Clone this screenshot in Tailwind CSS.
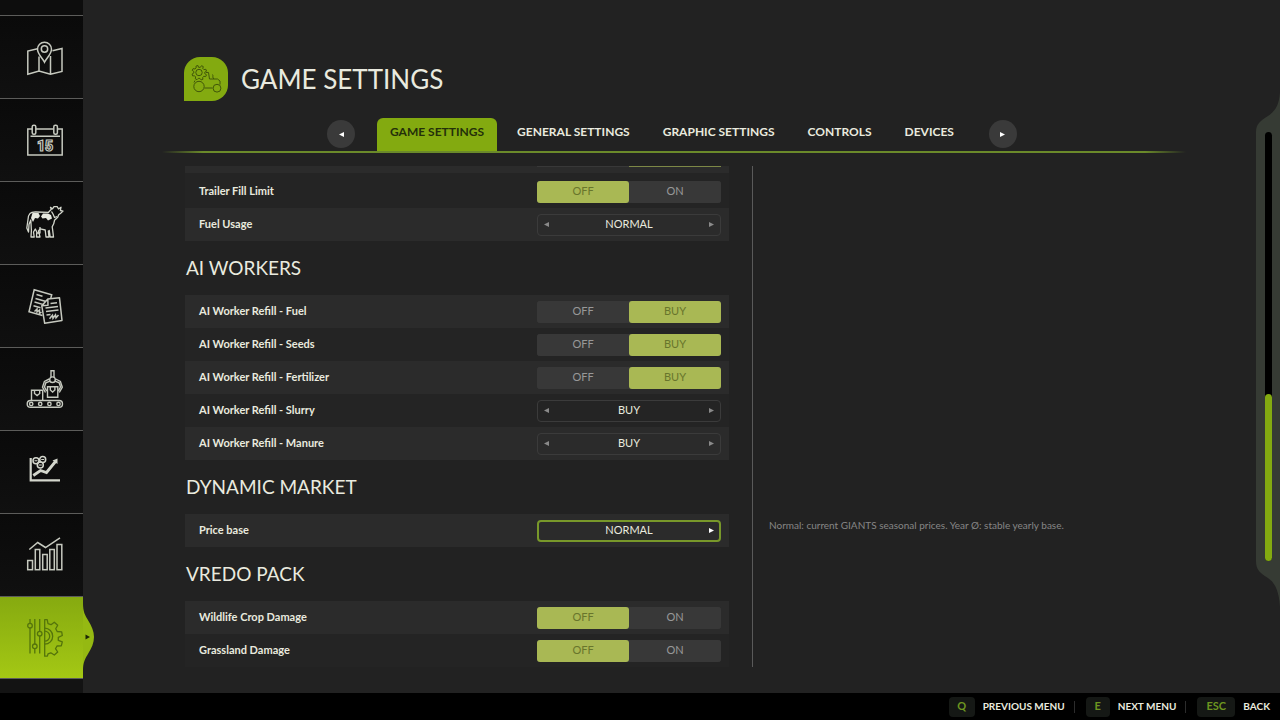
<!DOCTYPE html>
<html lang="en">
<head>
  <meta charset="UTF-8">
  <title>Game Settings</title>
  <meta name="viewport" content="width=device-width, initial-scale=1.0">
  <script src="https://cdn.jsdelivr.net/npm/@tailwindcss/browser@4"></script>
</head>
<body class="flex h-screen flex-col overflow-hidden bg-[#222222] font-[Lato,'Open_Sans',sans-serif] text-[#e9eadf]">
  <div class="flex min-h-0 flex-1">

    <!-- Sidebar -->
    <nav class="z-10 flex w-[83px] shrink-0 flex-col bg-[#0d0d0d]" aria-label="Menu">
      <div class="h-4 shrink-0 border-b border-[#5c5c5a]"></div>

      <a href="#map" aria-label="Map" class="flex h-[83px] shrink-0 items-center border-b border-[#5c5c5a] bg-linear-to-b from-[#0a0a0a] to-[#101010] pl-[26px]">
        <svg class="size-[38px]" viewBox="0 0 38 38" fill="none" stroke="#c6c9bf" stroke-width="1.5">
          <path d="M11.5 10.8 1.8 13v23.3L13 33l11.5 3.3L36 33.4V10.5l-9.5 2.3M13 33V18.500M24.500 36.300V18"/>
          <path d="M18.500 24.200c-2-4.200-7-8.200-7-13a7 7 0 0 1 14 0c0 4.800-5 8.800-7 13Z"/>
          <circle cx="18.500" cy="11" r="3.200"/>
        </svg>
      </a>

      <a href="#calendar" aria-label="Calendar" class="flex h-[83px] shrink-0 items-center border-b border-[#5c5c5a] bg-linear-to-b from-[#0a0a0a] to-[#101010] pl-[26px]">
        <svg class="size-[38px]" viewBox="0 0 38 38" fill="none" stroke="#c6c9bf" stroke-width="1.5">
          <path d="M6 8H1.800v26h34.400V8H32M10 8h17.500M4.500 15.200h29.500"/>
          <rect x="6.200" y="4.200" width="3.600" height="9" rx="1.500"/>
          <rect x="27.800" y="4.200" width="3.600" height="9" rx="1.500"/>
          <text x="19" y="29.500" text-anchor="middle" font-family="Roboto" font-size="14" font-weight="900" stroke-width="1.200">15</text>
        </svg>
      </a>

      <a href="#animals" aria-label="Animals" class="flex h-[83px] shrink-0 items-center border-b border-[#5c5c5a] bg-linear-to-b from-[#0a0a0a] to-[#101010] pl-[26px]">
        <svg class="size-[38px]" viewBox="0 0 38 38" fill="none" stroke="#d3d6cc" stroke-width="1.300" stroke-linejoin="round">
          <path d="M4 9.500C5.500 7.800 8 8 10 8l12.500.300 2.800-3-.8-2 2 1.600 1.500-2.300h3.200L32.500 5l2.500-1.800-.6 3.300 2.600.6-2.300 2.200-2 1.500-1 2.500-3.200 3-.8 3.500-1.500 3 .5 3.500.8 6.700h-3.300l-.9-6.500-1 .500.700 6h-3l-.8-7-5-1.200-1.700 2.200 1.500 6H10.500l.3-5-1.500-3-1.800 3 .7 5H5l.4-6.500L4.800 16 3 20.500 2.500 28l-1.700-4L2.500 12Z"/>
          <path d="M6.500 9h6l1.500 3-2 2.500-3-.5L7 18l-2-4Z" fill="#e6e8df" stroke="none"/>
          <path d="M17 9.500h5l3 1.500 1 3.500-4 2-2-2.500-3.500.500-1.500-2Z" fill="#e6e8df" stroke="none"/>
          <path d="M25.500 7.500 27 10l1.500 3.500L31 12.500M14 23v6h-3"/>
        </svg>
      </a>

      <a href="#contracts" aria-label="Contracts" class="flex h-[83px] shrink-0 items-center border-b border-[#5c5c5a] bg-linear-to-b from-[#0a0a0a] to-[#101010] pl-[26px]">
        <svg class="size-[38px]" viewBox="0 0 38 38" fill="none" stroke="#c6c9bf" stroke-width="1.500">
          <path d="M16.500 28.500 3 24.800 8.200 2.800l17.500 5-1 4"/>
          <path d="M10.500 7.500l6 1.700M9.500 11.500l10.500 3M8.500 15l9 2.600M7.500 18.800l7 2"/>
          <path d="m8.500 24.500 2.500-2.500v3l2.500-2v3.500l2-1.500"/>
          <path d="M15.800 18.800 21.800 12l11.700-1.200L36 33.400l-17.300 2.900ZM15.800 18.800l6.200-.6-.2-6.200" stroke-linejoin="round"/>
          <path d="m24.500 16.500 6.500-.8M19.500 21l12.500-1.600M20 24.500l12.500-1.600M20.500 28l4-.5"/>
          <path d="m23.500 31.800 3-3.500.5 3 2.500-3.500.5 3 2.500-2.800"/>
        </svg>
      </a>

      <a href="#production" aria-label="Production" class="flex h-[83px] shrink-0 items-center border-b border-[#5c5c5a] bg-linear-to-b from-[#0a0a0a] to-[#101010] pl-[26px]">
        <svg class="size-[38px]" viewBox="0 0 38 38" fill="none" stroke="#c6c9bf" stroke-width="1.400">
          <rect x="1.200" y="30.500" width="35.300" height="6.800" rx="3.400"/>
          <circle cx="5.200" cy="33.900" r="1.700"/><circle cx="14.200" cy="33.900" r="1.700"/>
          <circle cx="23.400" cy="33.900" r="1.700"/><circle cx="32.500" cy="33.900" r="1.700"/>
          <path d="M5.500 30.500V20.300h11.200v10.200M8.500 20.500v3l2.600 2 2.600-2v-3"/>
          <path d="M21.500 16.800h10.300v10.500H21.500ZM24.300 17v3l2.300 2 2.300-2v-3"/>
          <path d="M25 7V.8h3V7"/>
          <circle cx="26.500" cy="9.700" r="2.800"/>
          <path d="m24 11.200-4.200 1.600-1.300 4.200 2.300 4.200M23.300 9l-4.900 2.400-1.900 5.800 3 5.300M29 11.200l4.200 1.600 1.300 4.200-2.300 4.200M29.700 9l4.700 2.400 1.900 5.800-3 5.300"/>
        </svg>
      </a>

      <a href="#prices" aria-label="Prices" class="flex h-[83px] shrink-0 items-center border-b border-[#5c5c5a] bg-linear-to-b from-[#0a0a0a] to-[#101010] pl-[26px]">
        <svg class="size-[38px]" viewBox="0 0 38 38" fill="none" stroke="#d3d6cc" stroke-width="1.500">
          <path d="M4.700 5v22.300H34" stroke-width="2.200"/>
          <path d="m7.300 22.500 7.200-5 6 2L29.500 8.500" stroke-width="2.800"/>
          <path d="m26.500 7.500 5-2v5.500Z" fill="#d3d6cc" stroke="none"/>
          <circle cx="10" cy="7.800" r="3"/><circle cx="16.700" cy="6.500" r="3"/><circle cx="14.300" cy="12" r="3"/>
          <path d="M8.500 7.800h3M15.200 6.500h3M12.800 12h3" stroke-width="1.100"/>
        </svg>
      </a>

      <a href="#statistics" aria-label="Statistics" class="flex h-[83px] shrink-0 items-center border-b border-[#5c5c5a] bg-linear-to-b from-[#0a0a0a] to-[#101010] pl-[26px]">
        <svg class="size-[38px]" viewBox="0 0 38 38" fill="none" stroke="#c6c9bf" stroke-width="1.500">
          <path d="m3.300 13.500 8.400-7 7.800 5L34 1.800"/>
          <rect x="1.700" y="24.500" width="4.800" height="9.200"/><rect x="9.300" y="13.500" width="4.500" height="20.200"/>
          <rect x="16.700" y="18.500" width="4.500" height="15.200"/><rect x="23.800" y="13.500" width="4.500" height="20.200"/>
          <rect x="31" y="8.500" width="4.800" height="25.200"/>
        </svg>
      </a>

      <a href="#settings" aria-label="Settings" aria-current="page" class="relative flex h-[82px] shrink-0 items-center border-b border-[#5c5c5a] bg-linear-to-b from-[#86aa10] to-[#a4c814] pl-[26px]">
        <svg class="size-[38px]" viewBox="0 0 38 38" fill="none" stroke="#54740b" stroke-width="1.300">
          <path d="M4 0v4.400M4 9v25.500M8.800 0v25M8.800 29.600v4.900M13.700 0v12.500M13.700 17v17.500"/>
          <circle cx="4" cy="6.700" r="2.300"/><circle cx="8.800" cy="27.300" r="2.300"/><circle cx="13.700" cy="14.700" r="2.300"/>
          <path d="M18.700.700h2.500l.8 4 3 1 3.300-2.500 3.400 3-2 3.600 1.500 2.700 4.500.3.600 3.700-4 1.800v3l4 1.500-1 4-4.300.2-1.500 2.700 2.200 3.300-3.400 3-3.500-2.200-2.800 1-.6 2.400h-2.700Z" stroke-linejoin="round"/>
          <path d="M18.700 9.200a8 8 0 0 1 0 16M18.700 12.200a5 5 0 0 1 0 10"/>
        </svg>
        <!-- pointer bulge over the page edge -->
        <svg class="absolute top-1.5 left-[83px] h-[68px] w-3" viewBox="0 0 12 68">
          <path d="M0 0c0 9 2 12 5.500 18C8.500 23 11 28 11 34s-2.500 11-5.500 16C2 56 0 59 0 68Z" fill="#95b912"/>
          <path d="M2.500 31.500 7 34l-4.500 2.500Z" fill="#1d2606"/>
        </svg>
      </a>
      <div class="flex-1 bg-[#131313]"></div>
    </nav>

    <!-- Page -->
    <main class="flex min-w-0 flex-1 flex-col pt-[57px]">
      <header class="flex h-11 shrink-0 items-center gap-[13px] pl-[101px]">
        <svg class="size-11 rounded-2xl rounded-bl-none bg-[#83aa10]" viewBox="0 0 44 44" fill="none" stroke="#41570a" stroke-width="1">
          <circle cx="15" cy="15.500" r="3.200"/>
          <path d="m14 8.500.5 1.800 1.800.1L17.500 8.700l1.800.9-.5 1.900 1.100 1.100 2-.3.600 1.900-1.700 1v1.500l1.700 1.100-.8 1.800-1.900-.3-1.100 1.100.2 1.900-1.800.6-1.200-1.500h-1.600L13 22.700l-1.700-.9.300-1.900-1-1.100-2 .1-.5-1.900 1.700-1v-1.500l-1.600-1.200.9-1.700 1.900.4 1.100-1-.1-1.900Z"/>
          <circle cx="15" cy="29.500" r="5.200"/><circle cx="33" cy="31.200" r="3.900"/>
          <path d="M22 15.500h2.500l1 6.500h8l2.500 2v3.500M30 22c-2-1-.500-3.500-1.500-4.500M20.500 31h8M11 23.500l-1 2"/>
        </svg>
        <h1 class="text-[26px] leading-8">GAME SETTINGS</h1>
      </header>

      <!-- Tabs -->
      <div class="mt-[17px] shrink-0 pl-[79px]">
        <div class="flex h-[33px] items-start justify-start gap-[22px] pl-[165px]">
          <button aria-label="Previous tab" class="mt-0.5 flex size-7 items-center justify-center rounded-full bg-[#3a3a3a]">
            <svg class="size-[5px]" viewBox="0 0 5 5"><path d="M5 0v5L0 2.500Z" fill="#fff"/></svg>
          </button>
          <div class="flex h-full gap-[7px] text-xs font-bold" role="tablist">
            <button role="tab" aria-selected="true" class="rounded-t-md bg-[#83aa10] px-[13px] pb-[5px] text-[#24300a]">GAME SETTINGS</button>
            <button role="tab" class="px-[13px] pb-[5px]">GENERAL SETTINGS</button>
            <button role="tab" class="px-[13px] pb-[5px]">GRAPHIC SETTINGS</button>
            <button role="tab" class="px-[13px] pb-[5px]">CONTROLS</button>
            <button role="tab" class="px-[13px] pb-[5px]">DEVICES</button>
          </div>
          <button aria-label="Next tab" class="mt-0.5 flex size-7 items-center justify-center rounded-full bg-[#3a3a3a]">
            <svg class="size-[5px]" viewBox="0 0 5 5"><path d="M0 0v5l5-2.500Z" fill="#fff"/></svg>
          </button>
        </div>
        <div class="mr-[70px] h-0.5 bg-[linear-gradient(to_right,transparent,#6b8a2a_4%,#6b8a2a_96%,transparent)]"></div>
      </div>

      <div class="mt-[13px] flex h-[501px] shrink-0 pl-[102px]">
        <div id="settings" class="w-[544px] shrink-0 overflow-hidden">
          <!-- tail of the row scrolled out above -->
          <div class="flex h-[7px] items-start justify-end bg-[#2b2b2b] pr-2">
            <div class="h-px w-[92px] bg-[#383838]"></div>
            <div class="h-px w-[92px] bg-[#7d8846]"></div>
          </div>
          <div class="h-0.5 bg-[#242424]"></div>
        </div>
        <aside class="ml-[23px] flex flex-1 flex-col justify-end border-l border-[#5a5a5a] pb-[134px] pl-4">
          <p class="text-[10px] leading-4 text-[#868686]">Normal: current GIANTS seasonal prices. Year Ø: stable yearly base.</p>
        </aside>
      </div>
    </main>

    <!-- Scrollbar -->
    <div class="flex w-6 shrink-0 flex-col pt-[92px] pb-[86px]" aria-hidden="true">
      <svg class="h-10 w-6" viewBox="0 0 24 40"><path d="M24 0c-1 14-5 19-12 24C4 29 0 32 0 40h24Z" fill="#363b34"/></svg>
      <div class="flex flex-1 justify-center bg-[#363b34]">
        <div class="flex w-[7px] flex-col justify-end rounded-full bg-black">
          <div class="h-[39%] rounded-full bg-[#83aa10]"></div>
        </div>
      </div>
      <svg class="h-[46px] w-6" viewBox="0 0 24 46"><path d="M24 46c-1-16-5-24-12-29C4 12 0 9 0 0h24Z" fill="#363b34"/></svg>
    </div>
  </div>

  <!-- Key hints -->
  <footer class="flex h-[27px] shrink-0 items-center justify-end bg-black pr-[10px] text-[10px] font-bold">
    <button class="flex items-center gap-2"><kbd class="flex h-5 w-[26px] items-center justify-center rounded-sm bg-[#151815] font-[Lato,sans-serif] text-[11px] text-[#6d9620]">Q</kbd>PREVIOUS MENU</button>
    <span class="mr-[11px] ml-[9px] h-3 w-px bg-[#2c2c2c]"></span>
    <button class="flex items-center gap-2"><kbd class="flex h-5 w-6 items-center justify-center rounded-sm bg-[#151815] font-[Lato,sans-serif] text-[11px] text-[#6d9620]">E</kbd>NEXT MENU</button>
    <span class="mr-[11px] ml-[9px] h-3 w-px bg-[#2c2c2c]"></span>
    <button class="flex items-center gap-2"><kbd class="flex h-5 w-[38px] items-center justify-center rounded-sm bg-[#151815] font-[Lato,sans-serif] text-[11px] text-[#6d9620]">ESC</kbd>BACK</button>
  </footer>

  <script>
    // "options" gives a two-way switch, "value" gives a stepper
    const sections = [
      { rows: [
        { label: 'Trailer Fill Limit', options: ['OFF', 'ON'], selected: 0 },
        { label: 'Fuel Usage', value: 'NORMAL', light: true }
      ] },
      { title: 'AI WORKERS', rows: [
        { label: 'AI Worker Refill - Fuel', options: ['OFF', 'BUY'], selected: 1, light: true },
        { label: 'AI Worker Refill - Seeds', options: ['OFF', 'BUY'], selected: 1 },
        { label: 'AI Worker Refill - Fertilizer', options: ['OFF', 'BUY'], selected: 1, light: true },
        { label: 'AI Worker Refill - Slurry', value: 'BUY' },
        { label: 'AI Worker Refill - Manure', value: 'BUY', light: true }
      ] },
      { title: 'DYNAMIC MARKET', rows: [
        { label: 'Price base', value: 'NORMAL', light: true, active: true }
      ] },
      { title: 'VREDO PACK', rows: [
        { label: 'Wildlife Crop Damage', options: ['OFF', 'ON'], selected: 0, light: true },
        { label: 'Grassland Damage', options: ['OFF', 'ON'], selected: 0 }
      ] }
    ];

    function switchHtml(row, id) {
      const buttons = row.options.map((text, i) => {
        const color = i === row.selected ? 'bg-[#a9b854] text-[#68752c]' : 'bg-[#383838] text-[#989898]';
        return `<button aria-pressed="${i === row.selected}" class="flex-1 rounded-[3px] ${color}">${text}</button>`;
      }).join('');
      return `<div role="group" aria-labelledby="${id}-label" class="flex h-[22px] w-[184px] rounded-[3px] bg-[#383838] text-[11px]">${buttons}</div>`;
    }

    function stepperHtml(row, id) {
      const border = row.active ? 'border-2 border-[#78982a] px-[5px]' : 'border border-[#3b3b3b] px-[6px]';
      const arrow = row.active ? 'fill-white' : 'fill-[#8a8a8a]';
      const left = row.active ? 'invisible' : '';
      return `<div class="flex h-[22px] w-[184px] items-center justify-between rounded-[4px] ${border} text-[11px]">
        <button aria-label="Previous" class="${left}"><svg class="h-[5px] w-[5px] ${arrow}" viewBox="0 0 5 5"><path d="M5 0v5L0 2.500Z"/></svg></button>
        <select id="${id}" class="w-28 appearance-none bg-transparent text-center [text-align-last:center]"><option>${row.value}</option></select>
        <button aria-label="Next"><svg class="h-[5px] w-[5px] ${arrow}" viewBox="0 0 5 5"><path d="M0 0v5l5-2.500Z"/></svg></button>
      </div>`;
    }

    let html = '';
    sections.forEach((section, s) => {
      if (section.title) {
        html += `<h2 class="flex h-[54px] items-center pl-px text-[19px]">${section.title}</h2>`;
      }
      section.rows.forEach((row, r) => {
        const id = 'setting-' + s + '-' + r;
        const bg = row.light ? 'bg-[#2b2b2b]' : 'bg-[#242424]';
        const label = row.options
          ? `<span id="${id}-label">${row.label}</span>`
          : `<label for="${id}">${row.label}</label>`;
        html += `<div class="flex h-[33px] items-center justify-between ${bg} pr-2 pl-[14px] text-[11px] font-bold">
          ${label}<div class="font-normal">${row.options ? switchHtml(row, id) : stepperHtml(row, id)}</div>
        </div>`;
      });
    });
    document.getElementById('settings').insertAdjacentHTML('beforeend', html);
  </script>
</body>
</html>
